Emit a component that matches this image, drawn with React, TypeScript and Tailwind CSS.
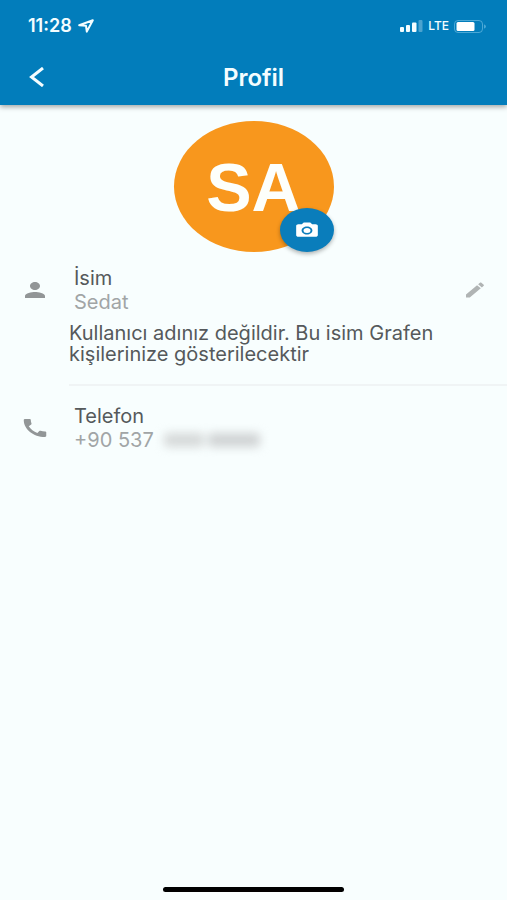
import type { ReactNode } from "react";

function Glyph({ className, children }: { className: string; children: ReactNode }) {
  return (
    <svg viewBox="0 0 24 24" preserveAspectRatio="none" fill="currentColor" aria-hidden="true" className={className}>
      {children}
    </svg>
  );
}

function StatusBar() {
  return (
    <div className="flex h-[52px] items-center justify-between pr-5 pl-7">
      <div className="flex items-center gap-[6px]">
        <span className="text-[18px] leading-5 font-semibold">11:28</span>
        <svg viewBox="0 0 16 14" className="h-[14px] w-4" fill="none" stroke="currentColor" strokeWidth="2" strokeLinejoin="round" aria-hidden="true">
          <path d="M1.2 6.2 14.8 1.2 8.8 12.6 8 6.8Z" />
        </svg>
      </div>
      <div className="flex items-center gap-[5px]">
        <svg viewBox="0 0 23 12" className="h-3 w-[23px]" fill="currentColor" aria-hidden="true">
          <rect x="0" y="7" width="4" height="5" rx="1" />
          <rect x="6" y="5" width="4" height="7" rx="1" />
          <rect x="12" y="2.500" width="4.500" height="9.500" rx="1" />
          <rect x="18.500" y="0" width="4" height="12" rx="1" opacity="0.3" />
        </svg>
        <span className="text-[12px] leading-4 font-medium">LTE</span>
        <svg viewBox="0 0 33 13" className="h-[13px] w-[33px]" aria-hidden="true">
          <rect x="0.500" y="0.500" width="28" height="12" rx="3.500" fill="none" stroke="#7cc4e8" strokeOpacity="0.6" />
          <rect x="2.500" y="2" width="18" height="9" rx="1.500" fill="white" />
          <path d="M30 4.500c2.600.700 2.600 3.300 0 4Z" fill="#7cc4e8" fillOpacity="0.6" />
        </svg>
      </div>
    </div>
  );
}

function Header() {
  return (
    <header className="relative bg-[#027dbb] text-[#f4fdff] shadow-[0_2px_5px_rgba(0,0,0,0.35)]">
      <StatusBar />
      <div className="grid h-[53px] grid-cols-[72px_1fr_72px] items-start">
        <button type="button" aria-label="Geri" className="flex h-[50px] items-center pl-[29px]">
          <svg viewBox="0 0 16 20" className="h-5 w-4" fill="none" stroke="currentColor" strokeWidth="3" aria-hidden="true">
            <path d="M14 1 2.500 10 14 19" />
          </svg>
        </button>
        <h1 className="text-center text-[24px] leading-[52px] font-semibold">Profil</h1>
      </div>
    </header>
  );
}

function Avatar() {
  return (
    <div className="relative mx-auto mt-4 flex h-[131px] w-40 items-center justify-center rounded-[50%] bg-[#f8971d]">
      <span className="font-['Liberation_Sans',Arial,sans-serif] text-[68px] leading-[68px] font-bold text-[#fdfffb]">SA</span>
      <button
        type="button"
        aria-label="Fotoğrafı değiştir"
        className="absolute right-0 bottom-0 flex h-[44px] w-[54px] items-center justify-center rounded-[50%] bg-[#0a7dbb] text-white shadow-[0_2px_4px_rgba(0,0,0,0.3)]"
      >
        <Glyph className="h-[19px] w-[26px]">
          <circle cx="12" cy="12" r="3.200" />
          <path d="M9 2 7.170 4H4c-1.100 0-2 .9-2 2v12c0 1.100.9 2 2 2h16c1.100 0 2-.9 2-2V6c0-1.100-.9-2-2-2h-3.170L15 2H9zm3 15c-2.760 0-5-2.240-5-5s2.240-5 5-5 5 2.240 5 5-2.240 5-5 5z" />
        </Glyph>
      </button>
    </div>
  );
}

export default function App() {
  return (
    <div className="flex min-h-screen flex-col bg-[#f8fefe] font-[Inter,'Liberation_Sans',sans-serif] text-[#55595b]">
      <Header />
      <main className="flex-1">
        <Avatar />
        <section className="mt-[14px]">
          <div className="flex items-center pr-5 pl-5">
            <Glyph className="h-6 w-[30px] shrink-0 text-[#929697]">
              <path d="M12 12c2.210 0 4-1.790 4-4s-1.790-4-4-4-4 1.790-4 4 1.790 4 4 4zm0 2c-2.670 0-8 1.340-8 4v2h16v-2c0-2.660-5.330-4-8-4z" />
            </Glyph>
            <dl className="ml-6 flex-1 text-[20px] leading-6">
              <dt>İsim</dt>
              <dd className="text-[#a1a5a6]">Sedat</dd>
            </dl>
            <button type="button" aria-label="İsmi düzenle" className="flex items-center text-[#b0b4b4]">
              <Glyph className="h-5 w-6">
                <path d="M3 17.250V21h3.750L17.810 9.940l-3.750-3.750L3 17.250zM20.710 7.040c.39-.39.39-1.020 0-1.410l-2.340-2.340c-.39-.39-1.020-.39-1.410 0l-1.830 1.830 3.750 3.750 1.830-1.830z" />
              </Glyph>
            </button>
          </div>
          <p className="mt-[9px] pr-12 pl-[69px] text-[20px] leading-[21px]">
            Kullanıcı adınız değildir. Bu isim Grafen kişilerinize gösterilecektir
          </p>
        </section>
        <hr className="mt-[19px] ml-[69px] border-t-2 border-[#f0f4f5]" />
        <section className="mt-[18px] flex items-center pr-5 pl-5">
          <Glyph className="h-6 w-[30px] shrink-0 text-[#929697]">
            <path d="M20.010 15.380c-1.230 0-2.420-.2-3.530-.56-.35-.12-.74-.03-1.010.24l-1.570 1.970c-2.830-1.350-5.480-3.900-6.890-6.830l1.950-1.660c.27-.28.35-.67.24-1.020-.37-1.110-.56-2.300-.56-3.530 0-.54-.45-.99-.99-.99H4.190C3.650 3 3 3.240 3 3.990 3 13.280 10.730 21 20.010 21c.71 0 .99-.63.99-1.180v-3.450c0-.54-.45-.99-.99-.99z" />
          </Glyph>
          <dl className="ml-6 text-[20px] leading-6">
            <dt>Telefon</dt>
            <dd className="flex items-center gap-[10px] text-[#a1a5a6]">
              +90 537
              <span className="flex gap-1 blur-[5px]" aria-hidden="true">
                <span className="h-[14px] w-10 rounded-sm bg-[#d6d9d9]" />
                <span className="h-[14px] w-[52px] rounded-sm bg-[#d0d3d4]" />
              </span>
            </dd>
          </dl>
        </section>
      </main>
      <footer className="flex justify-center pb-2">
        <div className="h-[5px] w-[181px] rounded-full bg-black" />
      </footer>
    </div>
  );
}
